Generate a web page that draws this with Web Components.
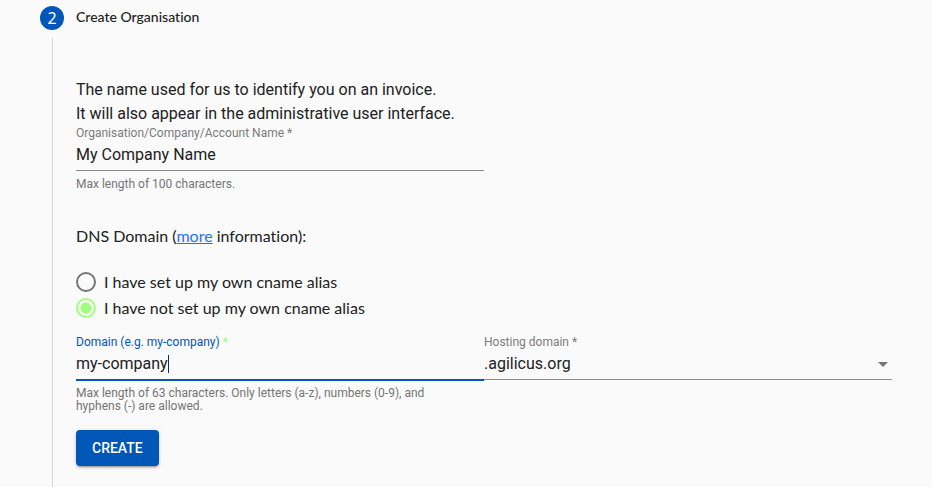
<!DOCTYPE html>
<html lang="en">
<head>
<meta charset="utf-8">
<title>Create Organisation</title>
<style>
  html { height: 100%; background: #fafafa; }
  body { margin: 0; height: 100%; overflow: hidden; color: #212121; font: 16px/24px Roboto, sans-serif; }
</style>
</head>
<body>
<setup-step number="2" heading="Create Organisation">
  <organisation-form></organisation-form>
</setup-step>
<script>
class BaseElement extends HTMLElement {
  connectedCallback() {
    if (this.shadowRoot) return;
    this.attachShadow({ mode: "open" }).innerHTML = this.render();
  }
}

customElements.define("setup-step", class extends BaseElement {
  render() {
    return `<style>
      :host { display: flex; flex-direction: column; box-sizing: border-box; min-height: 100%; padding: 5px 40px 0 40px; }
      header { display: flex; align-items: center; gap: 12px; height: 25px; }
      .badge { width: 24px; height: 24px; border-radius: 50%; background: #0057b8; color: #fff; text-align: center; font: 16px/24px "Noto Sans", sans-serif; }
      h2 { margin: 0 0 2px; font: 500 14px/20px Lato, sans-serif; font-variant-ligatures: none; }
      .body { flex: 1; margin: 8px 0 0 12px; padding: 40px 0 21px 23px; border-left: 1px solid #d6d6d6; }
    </style>
    <header><span class="badge">${this.getAttribute("number")}</span><h2>${this.getAttribute("heading")}</h2></header>
    <div class="body"><slot></slot></div>`;
  }
});

customElements.define("text-field", class extends BaseElement {
  render() {
    const active = this.hasAttribute("active");
    return `<style>
      :host { display: block; color: #212121; }
      label { display: block; font-size: 12px; line-height: 14px; color: #7b7b7b; }
      .line { display: flex; align-items: center; height: 30px; border-bottom: 1px solid #8c8c8c; }
      input { flex: 1; min-width: 0; margin: 0; padding: 0; border: 0; outline: 0; background: none; color: inherit; font: 16px/20px Roboto, sans-serif; }
      .hint { padding: 7px 12px 0 0; font-size: 12px; line-height: 13px; color: #757575; }
      .active label { color: #0057b8; }
      .active label span { color: #a1f97f; }
      .active .line { border-bottom: 2px solid #0057b8; }
      .active input { flex: none; field-sizing: content; caret-color: transparent; }
      .active .hint { padding-top: 6px; }
      .caret { width: 1px; height: 18px; background: #0b2d55; }
    </style>
    <div class="${active ? "active" : ""}">
      <label for="field">${this.getAttribute("label")} <span>*</span></label>
      <div class="line"><input id="field" type="text" required value="${this.getAttribute("value")}">${active ? '<span class="caret"></span>' : ""}</div>
      <div class="hint"><slot></slot></div>
    </div>`;
  }
});

customElements.define("select-field", class extends BaseElement {
  render() {
    return `<style>
      :host { display: block; color: #212121; }
      label { display: block; font-size: 12px; line-height: 14px; color: #7b7b7b; }
      .line { display: grid; align-items: center; height: 30px; border-bottom: 1px solid #8c8c8c; }
      select, svg { grid-area: 1 / 1; }
      select { appearance: none; width: 100%; margin: 0; padding: 0 20px 0 0; border: 0; outline: 0; background: none; color: inherit; font: 16px/20px Roboto, sans-serif; }
      svg { justify-self: end; margin-right: 4px; pointer-events: none; }
    </style>
    <label for="field">${this.getAttribute("label")} *</label>
    <div class="line">
      <select id="field" required><option>${this.getAttribute("value")}</option></select>
      <svg width="10" height="5" viewBox="0 0 10 5"><path d="M0 0h10L5 5z" fill="#757575"/></svg>
    </div>`;
  }
});

customElements.define("alias-choice", class extends BaseElement {
  render() {
    return `<style>
      :host { display: block; font: 16px/26px Lato, sans-serif; }
      label { display: flex; align-items: center; gap: 8px; }
      input { appearance: none; box-sizing: border-box; width: 20px; height: 20px; margin: 0; border: 2px solid #757575; border-radius: 50%; }
      input:checked { border-color: #a1ff80; background: radial-gradient(circle, #a1ff80 0 5px, transparent 6px); }
    </style>
    <label><input type="radio" name="alias"><span>I have set up my own cname alias</span></label>
    <label><input type="radio" name="alias" checked><span>I have not set up my own cname alias</span></label>`;
  }
});

customElements.define("action-button", class extends BaseElement {
  render() {
    return `<style>
      :host { display: block; }
      button { display: block; height: 36px; margin: 0; padding: 0 16px; border: 0; border-radius: 4px; background: #0057b8; color: #fff; font: 500 14px/36px Roboto, sans-serif; box-shadow: 0 3px 1px -2px #0003, 0 2px 2px #0002, 0 1px 5px #0002; }
    </style>
    <button type="button"><slot></slot></button>`;
  }
});

customElements.define("organisation-form", class extends BaseElement {
  render() {
    return `<style>
      :host { display: block; }
      p { margin: 0; }
      .half { width: 50%; }
      .dns { margin: 33px 0 21px; font-family: Lato, sans-serif; font-variant-ligatures: none; }
      a { color: #1a73ff; }
      .row { display: grid; grid-template-columns: 1fr 1fr; margin-top: 14px; }
      action-button { margin-top: 17px; }
    </style>
    <p>The name used for us to identify you on an invoice.<br>It will also appear in the administrative user interface.</p>
    <text-field class="half" label="Organisation/Company/Account Name" value="My Company Name">Max length of 100 characters.</text-field>
    <p class="dns">DNS Domain (<a href="#more">more</a> information):</p>
    <alias-choice></alias-choice>
    <div class="row">
      <text-field active label="Domain (e.g. my-company)" value="my-company">Max length of 63 characters. Only letters (a-z), numbers (0-9), and hyphens (-) are allowed.</text-field>
      <select-field label="Hosting domain" value=".agilicus.org"></select-field>
    </div>
    <action-button>CREATE</action-button>`;
  }
});
</script>
</body>
</html>
